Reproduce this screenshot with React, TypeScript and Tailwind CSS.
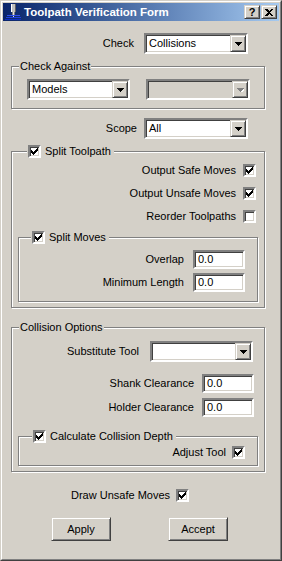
import React from "react";

const FONT = { fontFamily: '"Liberation Sans", Arial, sans-serif' };

const sunken =
  "border-2 border-t-[#808080] border-l-[#808080] border-b-white border-r-white shadow-[inset_1px_1px_0_#404040,inset_-1px_-1px_0_#d4d0c8]";
const raised =
  "border border-t-[#d4d0c8] border-l-[#d4d0c8] border-b-[#404040] border-r-[#404040] shadow-[inset_1px_1px_0_#fff,inset_-1px_-1px_0_#808080]";

function Check({ checked }: { checked: boolean }) {
  return (
    <div className={`w-[13px] h-[13px] bg-white ${sunken} flex items-center justify-center shrink-0`}>
      {checked && (
        <svg width="7" height="7" viewBox="0 0 7 7" shapeRendering="crispEdges">
          <path d="M0 2h1v3H0zM1 3h1v3H1zM2 4h1v3H2zM3 3h1v3H3zM4 2h1v3H4zM5 1h1v3H5zM6 0h1v3H6z" fill="#000" />
        </svg>
      )}
    </div>
  );
}

function Combo({ value, w, disabled }: { value: string; w: string; disabled?: boolean }) {
  return (
    <div className={`${w} h-[21px] ${sunken} ${disabled ? "bg-[#d4d0c8]" : "bg-white"} flex items-center shrink-0`}>
      <div className="flex-1 pl-[3px] text-[11px] leading-[13px] text-black">{value}</div>
      <div className={`w-[16px] h-[17px] bg-[#d4d0c8] ${raised} flex items-center justify-center`}>
        <svg width="7" height="4" viewBox="0 0 7 4" shapeRendering="crispEdges">
          {disabled && <path d="M1 1h7L4.5 5z" fill="#fff" />}
          <path d="M0 0h7L3.5 4z" fill={disabled ? "#808080" : "#000"} />
        </svg>
      </div>
    </div>
  );
}

function TextBox({ value, w }: { value: string; w: string }) {
  return (
    <div className={`${w} h-[19px] ${sunken} bg-white flex items-center pl-[3px] text-[11px] leading-[13px] shrink-0`}>
      {value}
    </div>
  );
}

const groupCls =
  "relative border border-[#808080] shadow-[1px_1px_0_#fff,inset_1px_1px_0_#fff]";

function Button({ label }: { label: string }) {
  return (
    <div
      className={`w-[60px] h-[24px] bg-[#d4d0c8] ${raised} flex items-center justify-center text-[11px] leading-[13px] text-black`}
    >
      {label}
    </div>
  );
}

function TitleIcon() {
  return (
    <svg width="16" height="16" viewBox="0 0 16 16" shapeRendering="crispEdges">
      <rect x="6" y="0" width="5" height="8" fill="#c0c0c0" />
      <rect x="6" y="0" width="1" height="8" fill="#ffffff" />
      <rect x="10" y="0" width="1" height="8" fill="#606060" />
      <rect x="7" y="8" width="3" height="4" fill="#808080" />
      <rect x="8" y="8" width="1" height="5" fill="#e0e0e0" />
      <rect x="2" y="11" width="13" height="1" fill="#3050f0" />
      <rect x="1" y="13" width="15" height="1" fill="#2040e0" />
      <rect x="0" y="15" width="16" height="1" fill="#1030c0" />
    </svg>
  );
}

export default function App() {
  return (
    <div style={FONT} className="w-[282px] h-[561px] bg-[#d4d0c8] text-black select-none">
      <div className="w-full h-full border border-t-[#d4d0c8] border-l-[#d4d0c8] border-b-[#404040] border-r-[#404040]">
        <div className="w-full h-full border border-t-white border-l-white border-b-[#808080] border-r-[#808080] p-[1px] flex flex-col">
          {/* Title bar */}
          <div className="h-[18px] flex items-center bg-gradient-to-r from-[#0a246a] to-[#a6caf0] pl-[2px] pr-[2px]">
            <TitleIcon />
            <div className="ml-[3px] text-white font-bold text-[11.5px] leading-[14px] flex-1">
              Toolpath Verification Form
            </div>
            <div className={`w-[16px] h-[14px] bg-[#d4d0c8] ${raised} flex items-center justify-center text-[11px] font-bold leading-[12px] text-black`}>
              ?
            </div>
            <div className={`ml-[1px] w-[16px] h-[14px] bg-[#d4d0c8] ${raised} flex items-center justify-center`}>
              <svg width="8" height="7" viewBox="0 0 8 7" shapeRendering="crispEdges">
                <path d="M0 0h2l2 2 2-2h2L5 3.5 8 7H6L4 5 2 7H0l3-3.5z" fill="#000" />
              </svg>
            </div>
          </div>

          {/* Check row */}
          <div className="mt-[12px] flex items-center text-[11px] leading-[13px]">
            <div className="w-[131px] text-right">Check</div>
            <div className="ml-[10px]">
              <Combo value="Collisions" w="w-[104px]" />
            </div>
          </div>

          {/* Check Against group */}
          <div className={`${groupCls} mt-[12px] ml-[8px] w-[254px] pt-[12px] pb-[8px] pl-[15px] flex items-center`}>
            <div className="absolute -top-[7px] left-[7px] bg-[#d4d0c8] px-[1px] text-[11px] leading-[13px]">
              Check Against
            </div>
            <Combo value="Models" w="w-[103px]" />
            <div className="ml-[16px]">
              <Combo value="" w="w-[104px]" disabled />
            </div>
          </div>

          {/* Scope row */}
          <div className="mt-[9px] flex items-center text-[11px] leading-[13px]">
            <div className="w-[134px] text-right">Scope</div>
            <div className="ml-[7px]">
              <Combo value="All" w="w-[104px]" />
            </div>
          </div>

          {/* Split Toolpath group */}
          <div className={`${groupCls} mt-[12px] ml-[8px] w-[254px] pt-[12px] pb-[5px] flex flex-col text-[11px] leading-[13px]`}>
            <div className="absolute -top-[7px] left-[15px] bg-[#d4d0c8] pr-[3px] pl-[1px] flex items-center">
              <Check checked />
              <span className="ml-[4px]">Split Toolpath</span>
            </div>
            <div className="flex items-center justify-end pr-[8px]">
              <span className="mr-[7px]">Output Safe Moves</span>
              <Check checked />
            </div>
            <div className="mt-[10px] flex items-center justify-end pr-[8px]">
              <span className="mr-[7px]">Output Unsafe Moves</span>
              <Check checked />
            </div>
            <div className="mt-[10px] flex items-center justify-end pr-[8px]">
              <span className="mr-[7px]">Reorder Toolpaths</span>
              <Check checked={false} />
            </div>

            {/* Split Moves inner group */}
            <div className={`${groupCls} mt-[14px] ml-[6px] w-[240px] pt-[12px] pb-[9px] pr-[12px] flex flex-col`}>
              <div className="absolute -top-[7px] left-[12px] bg-[#d4d0c8] pr-[3px] pl-[1px] flex items-center">
                <Check checked />
                <span className="ml-[4px]">Split Moves</span>
              </div>
              <div className="flex items-center justify-end">
                <span className="mr-[9px]">Overlap</span>
                <TextBox value="0.0" w="w-[52px]" />
              </div>
              <div className="mt-[4px] flex items-center justify-end">
                <span className="mr-[9px]">Minimum Length</span>
                <TextBox value="0.0" w="w-[52px]" />
              </div>
            </div>
          </div>

          {/* Collision Options group */}
          <div className={`${groupCls} mt-[19px] ml-[8px] w-[254px] pt-[13px] pb-[5px] flex flex-col text-[11px] leading-[13px]`}>
            <div className="absolute -top-[7px] left-[7px] bg-[#d4d0c8] px-[1px]">Collision Options</div>
            <div className="flex items-center justify-end pr-[11px]">
              <span className="mr-[11px]">Substitute Tool</span>
              <Combo value="" w="w-[103px]" />
            </div>
            <div className="mt-[12px] flex items-center justify-end pr-[10px]">
              <span className="mr-[8px]">Shank Clearance</span>
              <TextBox value="0.0" w="w-[52px]" />
            </div>
            <div className="mt-[5px] flex items-center justify-end pr-[10px]">
              <span className="mr-[8px]">Holder Clearance</span>
              <TextBox value="0.0" w="w-[52px]" />
            </div>

            {/* Calculate Collision Depth */}
            <div className={`${groupCls} mt-[19px] ml-[6px] w-[240px] pt-[9px] pb-[6px] pr-[12px] flex flex-col`}>
              <div className="absolute -top-[7px] left-[13px] bg-[#d4d0c8] pr-[3px] pl-[1px] flex items-center">
                <Check checked />
                <span className="ml-[4px]">Calculate Collision Depth</span>
              </div>
              <div className="flex items-center justify-end">
                <span className="mr-[6px]">Adjust Tool</span>
                <Check checked />
              </div>
            </div>
          </div>

          {/* Draw Unsafe Moves */}
          <div className="mt-[17px] ml-[68px] flex items-center text-[11px] leading-[13px]">
            <span className="mr-[6px]">Draw Unsafe Moves</span>
            <Check checked />
          </div>

          {/* Buttons */}
          <div className="mt-[15px] ml-[48px] flex">
            <Button label="Apply" />
            <div className="ml-[57px]">
              <Button label="Accept" />
            </div>
          </div>
        </div>
      </div>
    </div>
  );
}
